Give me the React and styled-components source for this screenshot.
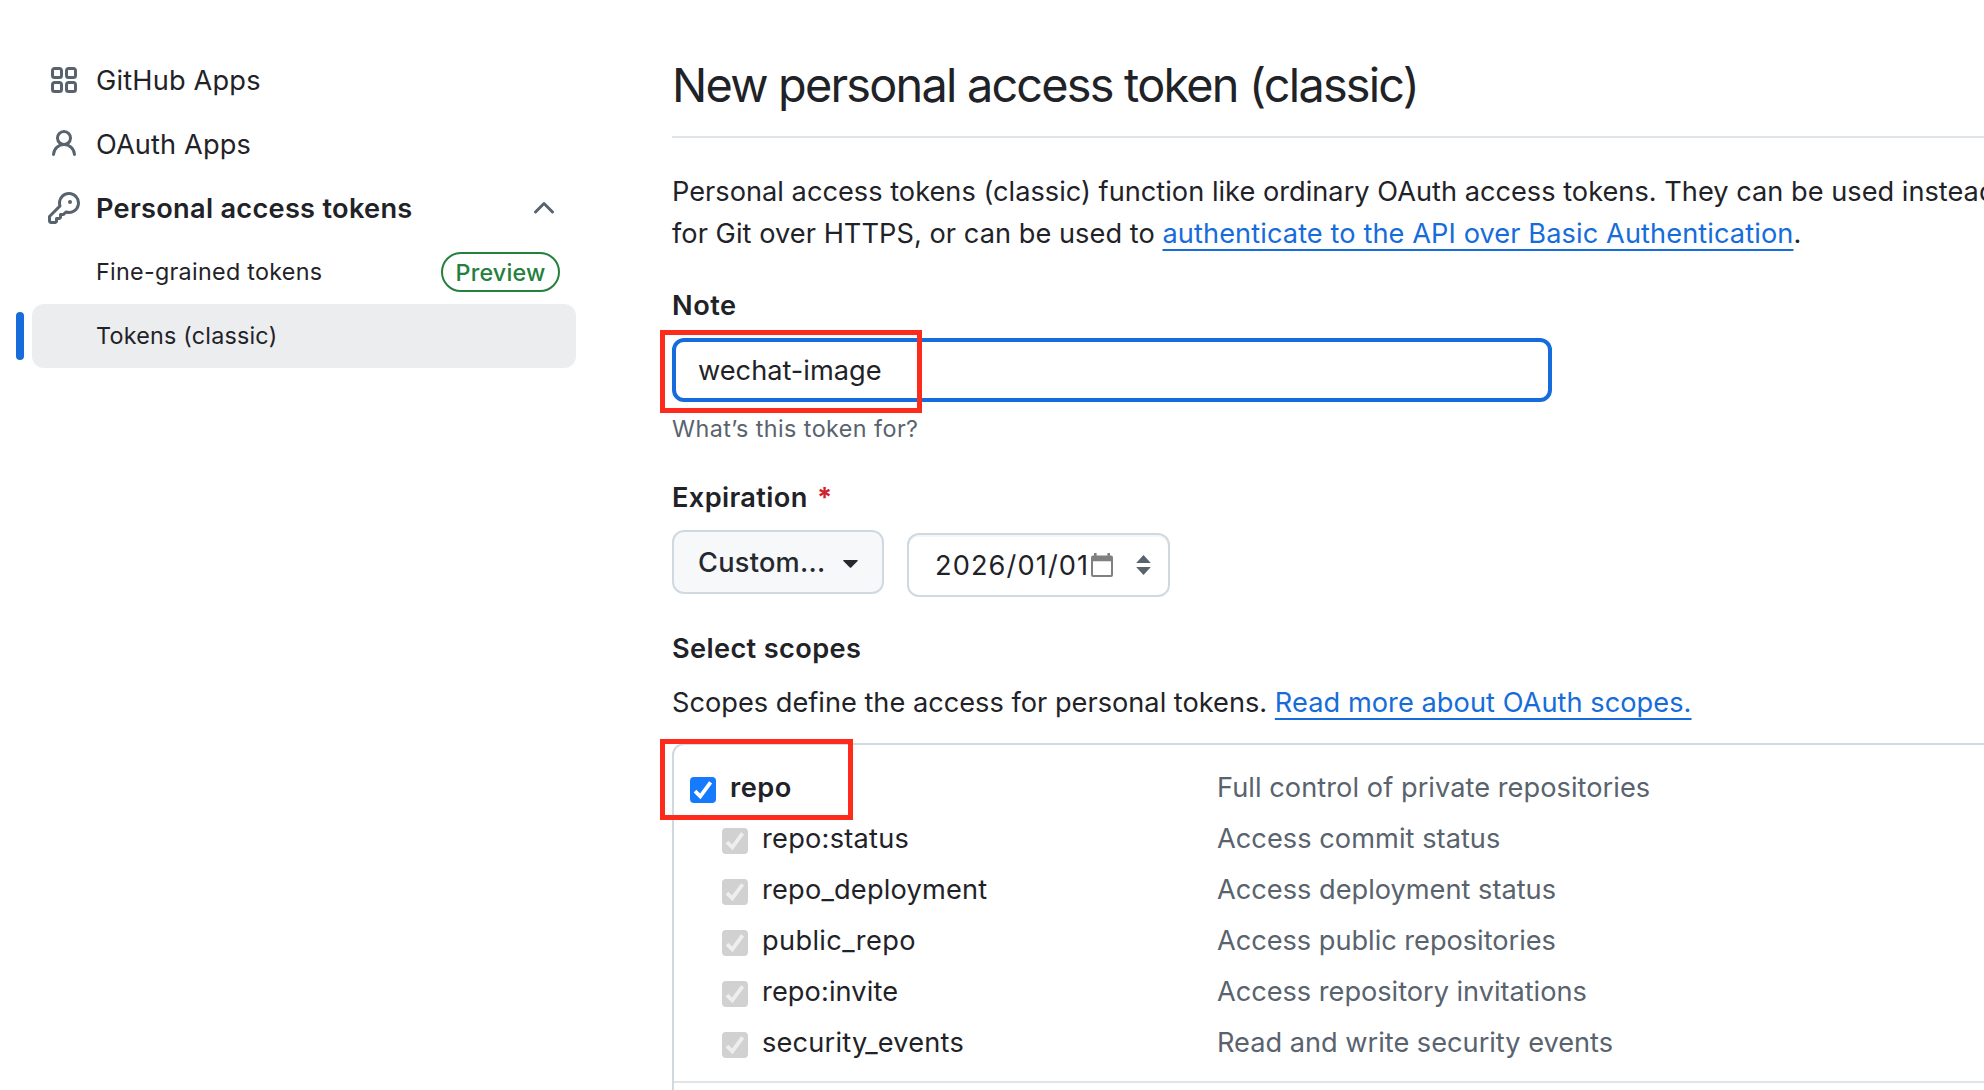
import React from "react";
import styled, { createGlobalStyle } from "styled-components";

const GlobalStyle = createGlobalStyle`
  * { box-sizing: border-box; }
  html, body { margin: 0; padding: 0; background: #fff; overflow: hidden; }
  body {
    font-family: Inter, "Liberation Sans", sans-serif;
    font-size: 27.2px;
    color: #1f2328;
  }
`;

const Page = styled.div`
  display: flex;
  width: 1984px;
  height: 1090px;
  overflow: hidden;
  background: #fff;
`;

const Track = styled.span`
  letter-spacing: ${(p) => p.$ls || 0}px;
`;

/* Sidebar */

const Sidebar = styled.nav`
  flex: 0 0 672px;
  display: flex;
  flex-direction: column;
  align-items: flex-start;
  padding: 48px 0 0 32px;
`;

const NavItem = styled.a`
  display: flex;
  align-items: center;
  gap: 16px;
  width: 544px;
  height: 64px;
  padding: 0 16px;
  border-radius: 12px;
  color: #1f2328;
  font-weight: ${(p) => (p.$bold ? 600 : 400)};
  white-space: nowrap;
`;

const SubItem = styled(NavItem)`
  position: relative;
  justify-content: space-between;
  padding-left: 64px;
  font-size: 23.3px;
  background: ${(p) => (p.$active ? "#ecedef" : "transparent")};
`;

const SubLabel = styled(Track)`
  margin-top: -2px;
`;

const ActiveBar = styled.span`
  position: absolute;
  left: -16px;
  top: 8px;
  width: 8px;
  height: 48px;
  border-radius: 4px;
  background: #156cda;
`;

const NavIcon = styled.svg`
  flex: none;
  width: 32px;
  height: 32px;
  fill: #59636e;
`;

const Spacer = styled.span`
  flex: 1;
`;

const PreviewLabel = styled.span`
  display: flex;
  align-items: center;
  justify-content: center;
  width: 119px;
  height: 40px;
  padding-top: 1px;
  border: 2px solid #24803c;
  border-radius: 20px;
  color: #24803c;
  font-weight: 550;
  font-size: 23.3px;
  line-height: 36px;
`;

/* Main column */

const Main = styled.main`
  flex: 1;
  min-width: 0;
  display: flex;
  flex-direction: column;
  padding-top: 49px;
`;

const Title = styled.h1`
  margin: 0;
  padding-bottom: 15px;
  border-bottom: 2px solid #dfe4e8;
  font-size: 46.8px;
  font-weight: 400;
  line-height: 72px;
  letter-spacing: -1.77px;
  white-space: nowrap;
`;

const Paragraph = styled.p`
  margin: ${(p) => p.$top}px 0 0;
  line-height: 42px;
  white-space: nowrap;
`;

const Link = styled.a`
  color: #156cda;
  letter-spacing: ${(p) => p.$ls || 0}px;
  text-decoration: underline;
  text-decoration-thickness: 2px;
  text-underline-offset: 6px;
  text-decoration-skip-ink: none;
`;

const FieldLabel = styled.label`
  display: block;
  margin-top: ${(p) => p.$top}px;
  font-weight: 600;
  line-height: 42px;
  letter-spacing: ${(p) => p.$ls || 0.36}px;
`;

const Required = styled.span`
  margin-left: 2px;
  color: #cf222e;
  font-weight: 700;
`;

const NoteField = styled.div`
  position: relative;
  display: flex;
  width: 880px;
  margin-top: 11px;
`;

const NoteInput = styled.input`
  width: 100%;
  height: 64px;
  padding: 0 22px;
  border: 4px solid #156cda;
  border-radius: 12px;
  outline: none;
  background: #fff;
  color: #1f2328;
  font: inherit;
`;

const Highlight = styled.div`
  position: absolute;
  left: ${(p) => p.$left}px;
  top: ${(p) => p.$top}px;
  width: ${(p) => p.$width}px;
  height: ${(p) => p.$height}px;
  border: 5px solid #fe2a1c;
  pointer-events: none;
`;

const Help = styled.p`
  margin: 9px 0 0;
  height: 35px;
  color: #59636e;
  font-size: 23.3px;
  line-height: 35px;
  letter-spacing: 0.45px;
`;

const Controls = styled.div`
  display: flex;
  align-items: flex-start;
  gap: 23px;
  margin-top: 11px;
`;

const SelectButton = styled.button`
  display: flex;
  align-items: center;
  justify-content: space-between;
  width: 212px;
  height: 64px;
  padding: 0 24px;
  border: 2px solid #cfd9e1;
  border-radius: 12px;
  background: #f6f8fa;
  color: #25292e;
  font: inherit;
  font-weight: 500;
  letter-spacing: 0.25px;
`;

const Caret = styled.svg`
  width: 15px;
  height: 8px;
  margin-top: 3px;
  fill: currentColor;
`;

const DateField = styled.div`
  display: flex;
  align-items: center;
  width: 263px;
  height: 64px;
  margin-top: 3px;
  padding: 0 17px 0 26px;
  border: 2px solid #cfd9e1;
  border-radius: 12px;
  box-shadow: inset 0 2px 0 rgba(31, 35, 40, 0.04);
`;

const DateText = styled.span`
  flex: 1;
  white-space: nowrap;
  letter-spacing: 1.1px;
`;

const CalendarIcon = styled.svg`
  flex: none;
  width: 22px;
  height: 24px;
  margin: -1px 23px 0 0;
`;

const UpDownIcon = styled.svg`
  flex: none;
  width: 15px;
  height: 20px;
  fill: #59636e;
`;

/* Scopes */

const ScopeBox = styled.section`
  position: relative;
  width: 1400px;
  margin-top: 19px;
  border: 2px solid #cfd9e1;
  border-radius: 12px;
`;

const ScopeGroup = styled.div`
  height: 338px;
  padding: 17px 16px 0;
  border-bottom: 2px solid #dfe4e8;
`;

const NextGroup = styled.div`
  height: 80px;
`;

const ScopeRow = styled.div`
  display: grid;
  grid-template-columns: 527px 1fr;
  align-items: center;
  height: 51px;
  white-space: nowrap;
`;

const ScopeName = styled.label`
  display: flex;
  align-items: center;
  padding-left: ${(p) => (p.$child ? 32 : 0)}px;
  gap: 14px;
  font-weight: ${(p) => (p.$child ? 400 : 600)};
`;

const ScopeText = styled.span`
  color: #59636e;
`;

const Check = styled.svg`
  flex: none;
  width: 26px;
  height: 26px;
  margin-top: 5px;
  border-radius: 4px;
  background: ${(p) => (p.$muted ? "#d1d1d1" : "#157afe")};
  stroke: ${(p) => (p.$muted ? "#eeeeee" : "#ffffff")};
`;

const ICONS = {
  apps: "M1.5 3.25c0-.966.784-1.75 1.75-1.75h2.5c.966 0 1.75.784 1.75 1.75v2.5A1.75 1.75 0 0 1 5.75 7.5h-2.5A1.75 1.75 0 0 1 1.5 5.75Zm7 0c0-.966.784-1.75 1.75-1.75h2.5c.966 0 1.75.784 1.75 1.75v2.5a1.75 1.75 0 0 1-1.75 1.75h-2.5A1.75 1.75 0 0 1 8.5 5.75Zm-7 7c0-.966.784-1.75 1.75-1.75h2.5c.966 0 1.75.784 1.75 1.75v2.5a1.75 1.75 0 0 1-1.75 1.75h-2.5a1.75 1.75 0 0 1-1.75-1.75Zm7 0c0-.966.784-1.75 1.75-1.75h2.5c.966 0 1.75.784 1.75 1.75v2.5a1.75 1.75 0 0 1-1.75 1.75h-2.5a1.75 1.75 0 0 1-1.75-1.75ZM3.25 3a.25.25 0 0 0-.25.25v2.5c0 .138.112.25.25.25h2.5A.25.25 0 0 0 6 5.75v-2.5A.25.25 0 0 0 5.75 3Zm7 0a.25.25 0 0 0-.25.25v2.5c0 .138.112.25.25.25h2.5a.25.25 0 0 0 .25-.25v-2.5a.25.25 0 0 0-.25-.25Zm-7 7a.25.25 0 0 0-.25.25v2.5c0 .138.112.25.25.25h2.5a.25.25 0 0 0 .25-.25v-2.5a.25.25 0 0 0-.25-.25Zm7 0a.25.25 0 0 0-.25.25v2.5c0 .138.112.25.25.25h2.5a.25.25 0 0 0 .25-.25v-2.5a.25.25 0 0 0-.25-.25Z",
  person: "M10.561 8.073a6.005 6.005 0 0 1 3.432 5.142.75.75 0 1 1-1.498.07 4.5 4.5 0 0 0-8.99 0 .75.75 0 0 1-1.498-.07 6.004 6.004 0 0 1 3.431-5.142 3.999 3.999 0 1 1 5.123 0ZM10.5 5a2.5 2.5 0 1 0-5 0 2.5 2.5 0 0 0 5 0Z",
  key: "M10.5 0a5.499 5.499 0 1 1-1.288 10.848l-.932.932a.749.749 0 0 1-.53.22H7v.75a.749.749 0 0 1-.22.53l-.5.5a.749.749 0 0 1-.53.22H5v.75a.749.749 0 0 1-.22.53l-.5.5a.749.749 0 0 1-.53.22h-2A1.75 1.75 0 0 1 0 14.25v-2c0-.199.079-.389.22-.53l4.932-4.932A5.5 5.5 0 0 1 10.5 0Zm-4 5.5c-.001.431.069.86.205 1.269a.75.75 0 0 1-.181.768L1.5 12.56v1.69c0 .138.112.25.25.25h1.69l.06-.06v-1.19a.75.75 0 0 1 .75-.75h1.19l.06-.06v-1.19a.75.75 0 0 1 .75-.75h1.19l1.023-1.025a.75.75 0 0 1 .768-.18A4 4 0 1 0 6.5 5.5ZM11 6a1 1 0 1 1 0-2 1 1 0 0 1 0 2Z",
  chevronUp: "M3.22 10.53a.749.749 0 0 1 0-1.06l4.25-4.25a.749.749 0 0 1 1.06 0l4.25 4.25a.749.749 0 1 1-1.06 1.06L8 6.811 4.28 10.53a.749.749 0 0 1-1.06 0Z",
};

const Icon = ({ name }) => (
  <NavIcon viewBox="0 0 16 16" aria-hidden="true">
    <path fillRule="evenodd" d={ICONS[name]} />
  </NavIcon>
);

const CheckMark = ({ muted }) => (
  <Check $muted={muted} viewBox="0 0 26 26" aria-hidden="true">
    <path d="M5 14.2 10.3 19.4 20.6 5.4" fill="none" strokeWidth="3.8" />
  </Check>
);

const SCOPES = [
  { name: "repo", text: "Full control of private repositories", ls: 0.5, tls: 0.05 },
  { name: "repo:status", text: "Access commit status", ls: 0.25, tls: 0.04, child: true },
  { name: "repo_deployment", text: "Access deployment status", ls: 0.2, tls: 0, child: true },
  { name: "public_repo", text: "Access public repositories", ls: 0.35, tls: -0.03, child: true },
  { name: "repo:invite", text: "Access repository invitations", ls: 0.1, tls: -0.03, child: true },
  { name: "security_events", text: "Read and write security events", ls: 0.2, tls: -0.01, child: true },
];

export default function App() {
  return (
    <Page>
      <GlobalStyle />
      <Sidebar>
        <NavItem>
          <Icon name="apps" />
          <Track $ls={0.18}>GitHub Apps</Track>
        </NavItem>
        <NavItem>
          <Icon name="person" />
          <Track $ls={0.12}>OAuth Apps</Track>
        </NavItem>
        <NavItem $bold>
          <Icon name="key" />
          <Track $ls={0.28}>Personal access tokens</Track>
          <Spacer />
          <Icon name="chevronUp" />
        </NavItem>
        <SubItem>
          <SubLabel $ls={0.3}>Fine-grained tokens</SubLabel>
          <PreviewLabel>
            <Track $ls={0.2}>Preview</Track>
          </PreviewLabel>
        </SubItem>
        <SubItem $active>
          <ActiveBar />
          <SubLabel $ls={0.23}>Tokens (classic)</SubLabel>
        </SubItem>
      </Sidebar>

      <Main>
        <Title>New personal access token (classic)</Title>
        <Paragraph $top={33}>
          <Track $ls={0.01}>
            Personal access tokens (classic) function like ordinary OAuth access tokens. They can be used instead
          </Track>
          <br />
          <Track $ls={0.04}>for Git over HTTPS, or can be used to </Track>
          <Link $ls={0.09}>authenticate to the API over Basic Authentication</Link>.
        </Paragraph>

        <FieldLabel $top={30} $ls={0.5}>Note</FieldLabel>
        <NoteField>
          <NoteInput defaultValue="wechat-image" />
          <Highlight $left={-12} $top={-8} $width={262} $height={83} />
        </NoteField>
        <Help>What’s this token for?</Help>

        <FieldLabel $top={31}>
          Expiration <Required>*</Required>
        </FieldLabel>
        <Controls>
          <SelectButton>
            Custom...
            <Caret viewBox="0 0 15 8">
              <path d="M0.6 0h13.8q.6 .4 .2 1L8.2 7.5q-.7.6-1.4 0L.4 1q-.4-.6.2-1Z" />
            </Caret>
          </SelectButton>
          <DateField>
            <DateText>2026/01/01</DateText>
            <CalendarIcon viewBox="0 0 22 24">
              <path
                fill="#808080"
                fillRule="evenodd"
                d="M3 0h2.6v2.4h10.8V0H19v2.4h1q2 0 2 2V22q0 2-2 2H2q-2 0-2-2V4.400q0-2 2-2h1ZM2 8.200V21.900h18V8.200Z"
              />
            </CalendarIcon>
            <UpDownIcon viewBox="0 0 15 20">
              <path d="M7.500 0 14.800 8H.2ZM7.500 20 .2 12h14.600Z" />
            </UpDownIcon>
          </DateField>
        </Controls>

        <FieldLabel $top={31}>Select scopes</FieldLabel>
        <Paragraph $top={12}>
          Scopes define the access for personal tokens. <Link $ls={0.05}>Read more about OAuth scopes.</Link>
        </Paragraph>

        <ScopeBox>
          <ScopeGroup>
            {SCOPES.map((s) => (
              <ScopeRow key={s.name}>
                <ScopeName $child={s.child}>
                  <CheckMark muted={s.child} />
                  <Track $ls={s.ls}>{s.name}</Track>
                </ScopeName>
                <ScopeText>
                  <Track $ls={s.tls}>{s.text}</Track>
                </ScopeText>
              </ScopeRow>
            ))}
          </ScopeGroup>
          <NextGroup />
          <Highlight $left={-14} $top={-6} $width={193} $height={81} />
        </ScopeBox>
      </Main>
    </Page>
  );
}
